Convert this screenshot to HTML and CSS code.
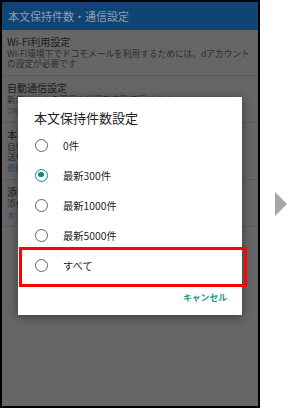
FILE: index.html
```html
<!DOCTYPE html>
<html lang="ja">
<head>
    <meta charset="UTF-8">
    <meta name="viewport" content="width=device-width, initial-scale=1.0">
    <title>本文保持件数設定</title>
    <link rel="stylesheet" href="styles.css">
</head>
<body>
    <div class="page">
        <div class="phone">
            <div class="app-bar">本文保持件数・通信設定</div>

            <div class="setting-list">
                <div class="setting-item">
                    <div class="setting-title">Wi-Fi利用設定</div>
                    <div class="setting-desc">Wi-Fi環境下でドコモメールを利用するためには、dアカウント<br>の設定が必要です</div>
                </div>
                <div class="setting-item">
                    <div class="setting-title">自動通信設定</div>
                    <div class="setting-desc">新着メールの受信や送信を自動で行います</div>
                    <div class="setting-value">ON（受信・送信）</div>
                </div>
                <div class="setting-item">
                    <div class="setting-title">本文保持件数設定</div>
                    <div class="setting-desc">自動で受信するメールの本文件数を設定します。受信、<br>送信したメールの本文を保持します</div>
                    <div class="setting-value">最新300件</div>
                </div>
                <div class="setting-item">
                    <div class="setting-title">添付ファイル受信設定</div>
                    <div class="setting-desc">添付ファイルを自動で受信します</div>
                    <div class="setting-value">本文と一緒に受信する</div>
                </div>
            </div>

            <div class="dialog">
                <div class="dialog-title">本文保持件数設定</div>
                <div class="radio-list">
                    <div class="radio-row"><span class="radio"></span>0件</div>
                    <div class="radio-row"><span class="radio checked"></span>最新300件</div>
                    <div class="radio-row"><span class="radio"></span>最新1000件</div>
                    <div class="radio-row"><span class="radio"></span>最新5000件</div>
                    <div class="radio-row"><span class="radio"></span>すべて</div>
                </div>
                <div class="dialog-actions">
                    <span class="text-button">キャンセル</span>
                </div>
            </div>

            <div class="highlight"></div>
        </div>

        <div class="next-arrow"></div>
    </div>
</body>
</html>
```

FILE: styles.css
```css
body {
    margin: 0;
    background: #fff;
    font-family: "Noto Sans CJK JP", "Noto Sans", sans-serif;
}
.page {
    display: flex;
    align-items: center;
    width: 288px;
    height: 408px;
}
.phone {
    position: relative;
    width: 256px;
    height: 404px;
    border: 2px solid #000;
    background: #666;
    overflow: hidden;
}
.app-bar {
    height: 28px;
    line-height: 28px;
    padding-left: 6px;
    background: #0f4474;
    color: #8b9db2;
    font-size: 11px;
}
.setting-item {
    padding: 5px 0 6px 5px;
    border-bottom: 1px solid #5b5b5b;
    white-space: nowrap;
}
.setting-title {
    font-size: 10px;
    line-height: 14px;
    color: #1b1b1b;
}
.setting-desc {
    font-size: 8.7px;
    line-height: 10px;
    color: #2e2e2e;
}
.setting-value {
    font-size: 8px;
    line-height: 11px;
    color: #2f4a63;
}
.dialog {
    position: absolute;
    left: 16px;
    top: 95px;
    width: 224px;
    background: #fff;
    box-shadow: 0 2px 10px rgba(0, 0, 0, 0.45);
}
.dialog-title {
    padding: 13px 0 0 16px;
    height: 20px;
    line-height: 16px;
    font-size: 13px;
    color: #222;
}
.radio-row {
    display: flex;
    align-items: center;
    gap: 15px;
    height: 30px;
    padding-left: 17px;
    font-size: 10.3px;
    color: #222;
}
.radio {
    position: relative;
    box-sizing: border-box;
    width: 13px;
    height: 13px;
    border: 1.6px solid #616161;
    border-radius: 50%;
}
.radio.checked {
    border-color: #0c8a78;
}
.radio.checked::after {
    content: "";
    position: absolute;
    left: 2.2px;
    top: 2.2px;
    width: 5.4px;
    height: 5.4px;
    border-radius: 50%;
    background: #0c8a78;
}
.dialog-actions {
    display: flex;
    justify-content: flex-end;
    height: 35px;
    line-height: 35px;
    padding-right: 15px;
}
.text-button {
    font-size: 8.8px;
    font-weight: bold;
    color: #1f978a;
}
.highlight {
    position: absolute;
    left: 17px;
    top: 245px;
    width: 222px;
    height: 34px;
    border: 3px solid #f00;
}
.next-arrow {
    margin-left: 15px;
    width: 0;
    height: 0;
    border-top: 12px solid transparent;
    border-bottom: 12px solid transparent;
    border-left: 12px solid #a6a6a6;
}
```
